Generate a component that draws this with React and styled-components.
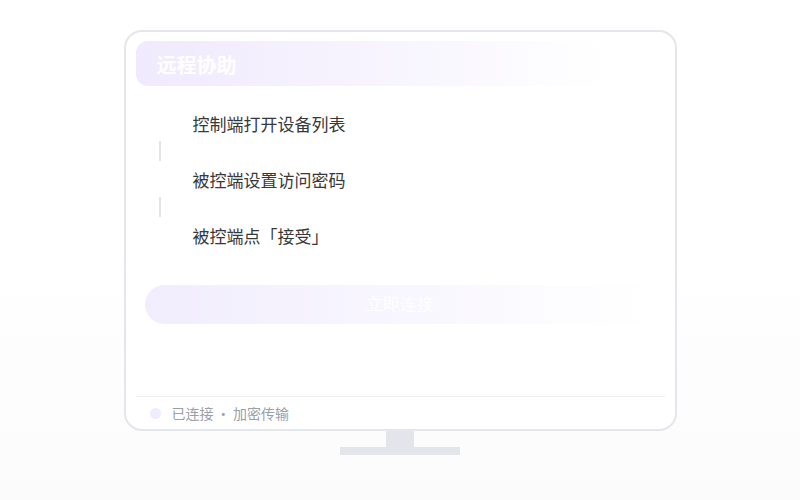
import styled, { createGlobalStyle } from "styled-components";

const GlobalStyle = createGlobalStyle`
    html, body {
        margin: 0;
        padding: 0;
    }
    body {
        background: linear-gradient(180deg, #ffffff 0%, #ffffff 50%, #fbfbfc 100%);
        font-family: "Noto Sans CJK SC", "Noto Sans", sans-serif;
    }
`;

const Page = styled.div`
    width: 800px;
    height: 500px;
    display: flex;
    flex-direction: column;
    align-items: center;
    padding-top: 30px;
    box-sizing: border-box;
`;

const Monitor = styled.div`
    width: 553px;
    height: 401px;
    box-sizing: border-box;
    border: 2px solid #e3e6eb;
    border-radius: 18px;
    background: #ffffff;
    display: flex;
    flex-direction: column;
    padding: 9px 10px 0;
`;

const Header = styled.div`
    height: 45px;
    border-radius: 12px;
    background: linear-gradient(90deg, #efeafd 0%, #f7f4fe 45%, #ffffff 90%);
    display: flex;
    align-items: center;
    justify-content: space-between;
    padding: 0 18px 0 21px;
`;

const Title = styled.span`
    color: #ffffff;
    font-size: 20px;
    font-weight: 700;
    line-height: 1;
    margin-top: 2px;
`;

const HeaderTag = styled.span`
    color: #ffffff;
    font-size: 13px;
`;

const Steps = styled.div`
    display: flex;
    flex-direction: column;
    margin-top: 19px;
    padding-left: 12px;
`;

const StepRow = styled.div`
    height: 36px;
    display: flex;
    align-items: center;
    gap: 21px;
`;

const Marker = styled.span`
    width: 24px;
    height: 24px;
    border-radius: 50%;
    background: #ffffff;
    flex-shrink: 0;
`;

const StepText = styled.span`
    color: #383838;
    font-size: 17px;
    line-height: 1;
`;

const Connector = styled.span`
    display: block;
    width: 2px;
    height: 20px;
    margin-left: 11px;
    background: #e3e5ea;
`;

const ConnectButton = styled.button`
    margin: 32px 10px 0 9px;
    height: 39px;
    border: none;
    border-radius: 20px;
    background: linear-gradient(90deg, #f1edfd 0%, #f8f6fe 50%, #ffffff 100%);
    color: #ffffff;
    font-family: serif;
    font-size: 17px;
    cursor: pointer;
`;

const Footer = styled.div`
    margin-top: auto;
    border-top: 1px solid #eef0f4;
    display: flex;
    align-items: center;
    gap: 11px;
    padding: 7px 14px 7px;
`;

const StatusDot = styled.span`
    width: 11px;
    height: 11px;
    border-radius: 50%;
    background: #f0ecfd;
`;

const StatusText = styled.span`
    color: #9aa0a8;
    font-size: 14px;
    line-height: 18px;
`;

const Neck = styled.div`
    width: 28px;
    height: 16px;
    background: #e2e5e9;
`;

const Base = styled.div`
    width: 120px;
    height: 8px;
    background: #e2e5e9;
`;

const steps = ["控制端打开设备列表", "被控端设置访问密码", "被控端点「接受」"];

export default function App() {
    return (
        <>
            <GlobalStyle />
            <Page>
                <Monitor>
                    <Header>
                        <Title>远程协助</Title>
                        <HeaderTag>安全连接</HeaderTag>
                    </Header>
                    <Steps>
                        {steps.map((text, idx) => (
                            <div key={idx}>
                                {idx > 0 && <Connector />}
                                <StepRow>
                                    <Marker />
                                    <StepText>{text}</StepText>
                                </StepRow>
                            </div>
                        ))}
                    </Steps>
                    <ConnectButton>立即连接</ConnectButton>
                    <Footer>
                        <StatusDot />
                        <StatusText>已连接&thinsp;·&thinsp;加密传输</StatusText>
                    </Footer>
                </Monitor>
                <Neck />
                <Base />
            </Page>
        </>
    );
}
